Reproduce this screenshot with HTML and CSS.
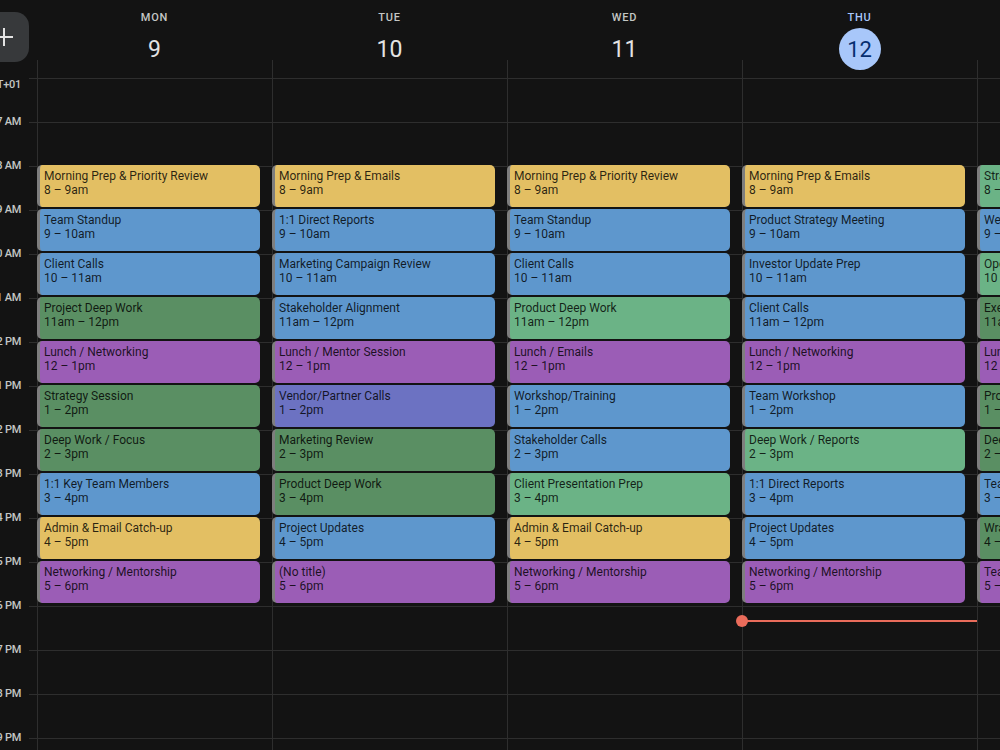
FILE: index.html
```html
<!DOCTYPE html>
<html lang="en">
<head>
    <meta charset="UTF-8">
    <meta name="viewport" content="width=device-width, initial-scale=1.0">
    <title>Calendar - Week</title>
    <link rel="stylesheet" href="styles.css">
</head>
<body>
    <div class="calendar">
        <!-- header -->
        <div class="corner">
            <button class="fab" aria-label="Create">
                <svg width="22" height="22" viewBox="0 0 22 22"><path d="M11 2v18M2 11h18" stroke="#e3e3e3" stroke-width="2" fill="none"/></svg>
            </button>
        </div>
        <div class="day-head col-1"><span class="day-name">MON</span><span class="day-num">9</span></div>
        <div class="day-head col-2"><span class="day-name">TUE</span><span class="day-num">10</span></div>
        <div class="day-head col-3"><span class="day-name">WED</span><span class="day-num">11</span></div>
        <div class="day-head col-4 today"><span class="day-name">THU</span><span class="day-num">12</span></div>
        <div class="day-head col-5"><span class="day-name">FRI</span><span class="day-num">13</span></div>

        <!-- hour lines -->
        <div class="hline r3"></div>
        <div class="hline r4"></div>
        <div class="hline r5"></div>
        <div class="hline r6"></div>
        <div class="hline r7"></div>
        <div class="hline r8"></div>
        <div class="hline r9"></div>
        <div class="hline r10"></div>
        <div class="hline r11"></div>
        <div class="hline r12"></div>
        <div class="hline r13"></div>
        <div class="hline r14"></div>
        <div class="hline r15"></div>
        <div class="hline r16"></div>
        <div class="hline r17"></div>
        <div class="hline r18"></div>

        <!-- gutter labels -->
        <div class="tz"><span>GMT+01</span></div>
        <div class="hour r4"><span>7 AM</span></div>
        <div class="hour r5"><span>8 AM</span></div>
        <div class="hour r6"><span>9 AM</span></div>
        <div class="hour r7"><span>10 AM</span></div>
        <div class="hour r8"><span>11 AM</span></div>
        <div class="hour r9"><span>12 PM</span></div>
        <div class="hour r10"><span>1 PM</span></div>
        <div class="hour r11"><span>2 PM</span></div>
        <div class="hour r12"><span>3 PM</span></div>
        <div class="hour r13"><span>4 PM</span></div>
        <div class="hour r14"><span>5 PM</span></div>
        <div class="hour r15"><span>6 PM</span></div>
        <div class="hour r16"><span>7 PM</span></div>
        <div class="hour r17"><span>8 PM</span></div>
        <div class="hour r18"><span>9 PM</span></div>

        <!-- days -->
        <div class="day col-1">
            <div class="event yellow"><div class="title">Morning Prep &amp; Priority Review</div><div class="time">8 – 9am</div></div>
            <div class="event blue"><div class="title">Team Standup</div><div class="time">9 – 10am</div></div>
            <div class="event blue"><div class="title">Client Calls</div><div class="time">10 – 11am</div></div>
            <div class="event sage"><div class="title">Project Deep Work</div><div class="time">11am – 12pm</div></div>
            <div class="event grape"><div class="title">Lunch / Networking</div><div class="time">12 – 1pm</div></div>
            <div class="event sage"><div class="title">Strategy Session</div><div class="time">1 – 2pm</div></div>
            <div class="event sage"><div class="title">Deep Work / Focus</div><div class="time">2 – 3pm</div></div>
            <div class="event blue"><div class="title">1:1 Key Team Members</div><div class="time">3 – 4pm</div></div>
            <div class="event yellow"><div class="title">Admin &amp; Email Catch-up</div><div class="time">4 – 5pm</div></div>
            <div class="event grape"><div class="title">Networking / Mentorship</div><div class="time">5 – 6pm</div></div>
        </div>

        <div class="day col-2">
            <div class="event yellow"><div class="title">Morning Prep &amp; Emails</div><div class="time">8 – 9am</div></div>
            <div class="event blue"><div class="title">1:1 Direct Reports</div><div class="time">9 – 10am</div></div>
            <div class="event blue"><div class="title">Marketing Campaign Review</div><div class="time">10 – 11am</div></div>
            <div class="event blue"><div class="title">Stakeholder Alignment</div><div class="time">11am – 12pm</div></div>
            <div class="event grape"><div class="title">Lunch / Mentor Session</div><div class="time">12 – 1pm</div></div>
            <div class="event lavender"><div class="title">Vendor/Partner Calls</div><div class="time">1 – 2pm</div></div>
            <div class="event sage"><div class="title">Marketing Review</div><div class="time">2 – 3pm</div></div>
            <div class="event sage"><div class="title">Product Deep Work</div><div class="time">3 – 4pm</div></div>
            <div class="event blue"><div class="title">Project Updates</div><div class="time">4 – 5pm</div></div>
            <div class="event grape"><div class="title">(No title)</div><div class="time">5 – 6pm</div></div>
        </div>

        <div class="day col-3">
            <div class="event yellow"><div class="title">Morning Prep &amp; Priority Review</div><div class="time">8 – 9am</div></div>
            <div class="event blue"><div class="title">Team Standup</div><div class="time">9 – 10am</div></div>
            <div class="event blue"><div class="title">Client Calls</div><div class="time">10 – 11am</div></div>
            <div class="event mint"><div class="title">Product Deep Work</div><div class="time">11am – 12pm</div></div>
            <div class="event grape"><div class="title">Lunch / Emails</div><div class="time">12 – 1pm</div></div>
            <div class="event blue"><div class="title">Workshop/Training</div><div class="time">1 – 2pm</div></div>
            <div class="event blue"><div class="title">Stakeholder Calls</div><div class="time">2 – 3pm</div></div>
            <div class="event mint"><div class="title">Client Presentation Prep</div><div class="time">3 – 4pm</div></div>
            <div class="event yellow"><div class="title">Admin &amp; Email Catch-up</div><div class="time">4 – 5pm</div></div>
            <div class="event grape"><div class="title">Networking / Mentorship</div><div class="time">5 – 6pm</div></div>
        </div>

        <div class="day col-4">
            <div class="event yellow"><div class="title">Morning Prep &amp; Emails</div><div class="time">8 – 9am</div></div>
            <div class="event blue"><div class="title">Product Strategy Meeting</div><div class="time">9 – 10am</div></div>
            <div class="event blue"><div class="title">Investor Update Prep</div><div class="time">10 – 11am</div></div>
            <div class="event blue"><div class="title">Client Calls</div><div class="time">11am – 12pm</div></div>
            <div class="event grape"><div class="title">Lunch / Networking</div><div class="time">12 – 1pm</div></div>
            <div class="event blue"><div class="title">Team Workshop</div><div class="time">1 – 2pm</div></div>
            <div class="event mint"><div class="title">Deep Work / Reports</div><div class="time">2 – 3pm</div></div>
            <div class="event blue"><div class="title">1:1 Direct Reports</div><div class="time">3 – 4pm</div></div>
            <div class="event blue"><div class="title">Project Updates</div><div class="time">4 – 5pm</div></div>
            <div class="event grape"><div class="title">Networking / Mentorship</div><div class="time">5 – 6pm</div></div>
            <div class="now-line"></div>
        </div>

        <div class="day col-5">
            <div class="event mint"><div class="title">Strategy Planning</div><div class="time">8 – 9am</div></div>
            <div class="event blue"><div class="title">Weekly Review</div><div class="time">9 – 10am</div></div>
            <div class="event mint"><div class="title">Operations Sync</div><div class="time">10 – 11am</div></div>
            <div class="event sage"><div class="title">Executive Briefing</div><div class="time">11am – 12pm</div></div>
            <div class="event grape"><div class="title">Lunch / Networking</div><div class="time">12 – 1pm</div></div>
            <div class="event sage"><div class="title">Product Review</div><div class="time">1 – 2pm</div></div>
            <div class="event sage"><div class="title">Deep Work</div><div class="time">2 – 3pm</div></div>
            <div class="event blue"><div class="title">Team Retro</div><div class="time">3 – 4pm</div></div>
            <div class="event sage"><div class="title">Wrap-up &amp; Planning</div><div class="time">4 – 5pm</div></div>
            <div class="event grape"><div class="title">Team Social</div><div class="time">5 – 6pm</div></div>
        </div>
    </div>
</body>
</html>
```

FILE: styles.css
```css
html, body {
    margin: 0;
    padding: 0;
    background: #131313;
    overflow: hidden;
}

body {
    font-family: Roboto, "Noto Sans", sans-serif;
    color: #e3e3e3;
    width: 1000px;
    height: 750px;
}

.calendar {
    display: grid;
    grid-template-columns: 37px repeat(5, 235px);
    grid-template-rows: 60px 18px repeat(16, 44px);
    width: 1212px;
}

/* header */
.corner {
    grid-column: 1;
    grid-row: 1;
}

.fab {
    width: 50px;
    height: 50px;
    margin: 12px 0 0 -21px;
    border: none;
    border-radius: 14px;
    background: #37393b;
    display: flex;
    align-items: center;
    justify-content: center;
    padding: 0;
}

.fab svg {
    display: block;
}

.day-head {
    grid-row: 1;
    display: flex;
    flex-direction: column;
    align-items: center;
    position: relative;
    z-index: 2;
}

.day-name {
    margin-top: 12px;
    font-size: 11px;
    line-height: 12px;
    font-weight: 500;
    letter-spacing: 0.8px;
    color: #c4c7c5;
}

.day-num {
    flex-shrink: 0;
    margin-top: 4px;
    width: 42px;
    height: 42px;
    border-radius: 50%;
    display: flex;
    align-items: center;
    justify-content: center;
    font-size: 23px;
    color: #e3e3e3;
}

.today .day-name {
    color: #a8c7fa;
}

.today .day-num {
    background: #a8c7fa;
    color: #062e6f;
    font-size: 22px;
}

.col-1 { grid-column: 2; }
.col-2 { grid-column: 3; }
.col-3 { grid-column: 4; }
.col-4 { grid-column: 5; }
.col-5 { grid-column: 6; }

.r3 { grid-row: 3; }
.r4 { grid-row: 4; }
.r5 { grid-row: 5; }
.r6 { grid-row: 6; }
.r7 { grid-row: 7; }
.r8 { grid-row: 8; }
.r9 { grid-row: 9; }
.r10 { grid-row: 10; }
.r11 { grid-row: 11; }
.r12 { grid-row: 12; }
.r13 { grid-row: 13; }
.r14 { grid-row: 14; }
.r15 { grid-row: 15; }
.r16 { grid-row: 16; }
.r17 { grid-row: 17; }
.r18 { grid-row: 18; }

/* grid lines */
.hline {
    grid-column: 1 / -1;
    margin-left: 29px;
    border-top: 1px solid #2e2e2e;
}

/* gutter: labels run off the left edge, keep them right aligned */
.tz, .hour {
    grid-column: 1;
    align-self: start;
    display: flex;
    justify-content: flex-end;
    padding-right: 16px;
    font-size: 11px;
    line-height: 14px;
    font-weight: 500;
    letter-spacing: -0.3px;
    color: #c4c7c5;
    white-space: nowrap;
}

.tz span, .hour span {
    flex-shrink: 0;
}

.tz {
    grid-row: 3;
}

.hour {
    margin-top: -7px;
}

/* day columns */
.day {
    grid-row: 2 / -1;
    border-left: 1px solid #2e2e2e;
    display: flex;
    flex-direction: column;
    gap: 2px;
    padding-top: 105px;
    min-width: 0;
}

.event {
    flex-shrink: 0;
    height: 42px;
    box-sizing: border-box;
    margin: 0 12px 0 -1px;
    padding: 4px 6px 0 4px;
    border-left: 3px solid #7e7e7e;
    border-radius: 5px;
    overflow: hidden;
    color: rgba(0, 0, 0, 0.82);
    font-size: 12px;
    line-height: 14px;
    white-space: nowrap;
}

.yellow { background: #e3bf63; }
.blue { background: #5e97cd; }
.sage { background: #5a8f63; }
.mint { background: #6bb386; }
.grape { background: #9b5db6; }
.lavender { background: #6c72c2; }

.now-line {
    flex-shrink: 0;
    position: relative;
    height: 2px;
    margin: 15px 0 0 -1px;
    background: #ea6c5b;
}

.now-line::before {
    content: "";
    position: absolute;
    left: -6px;
    top: -5px;
    width: 12px;
    height: 12px;
    border-radius: 50%;
    background: #ea6c5b;
}
```
